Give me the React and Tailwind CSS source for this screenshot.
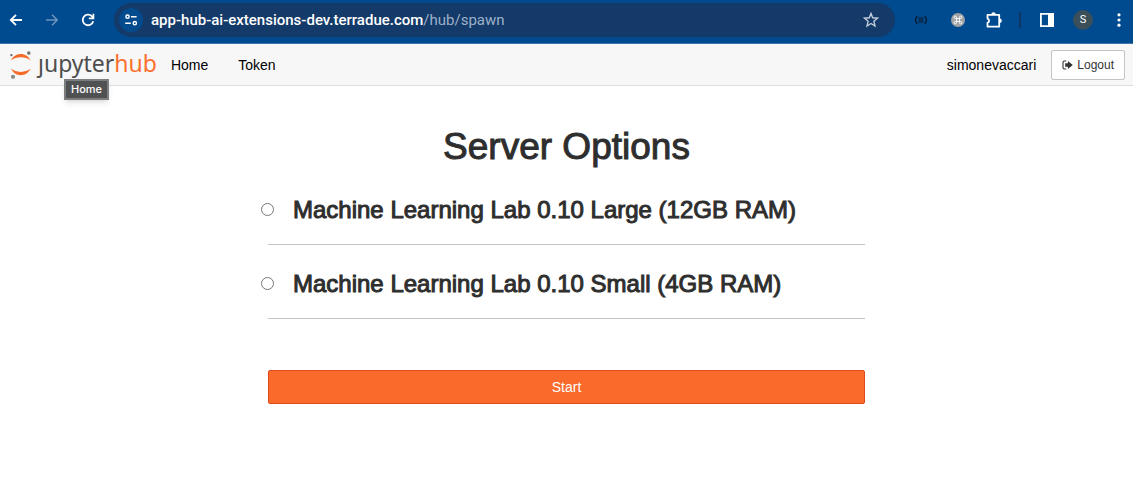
const servers = [
  { id: "large", name: "Machine Learning Lab 0.10 Large (12GB RAM)" },
  { id: "small", name: "Machine Learning Lab 0.10 Small (4GB RAM)" },
];

function BrowserBar() {
  return (
    <header className="flex h-11 items-center border-b border-[#3f73a9] bg-[#004a8f] pb-1 text-white">
      <div className="flex items-center gap-5 pl-2">
        <button type="button" aria-label="Back">
          <svg width="16" height="16" viewBox="0 0 16 16" fill="none" stroke="currentColor" strokeWidth="1.8">
            <path d="M14 8H3M8 2.8 2.8 8 8 13.2" />
          </svg>
        </button>
        <button type="button" aria-label="Forward" className="text-[#6d94bd]">
          <svg width="16" height="16" viewBox="0 0 16 16" fill="none" stroke="currentColor" strokeWidth="1.6">
            <path d="M2 8h11M8 2.8 13.2 8 8 13.2" />
          </svg>
        </button>
        <button type="button" aria-label="Reload">
          <svg width="16" height="16" viewBox="0 0 16 16" fill="none" stroke="currentColor" strokeWidth="1.8">
            <path d="M13.2 9.2A5.3 5.3 0 1 1 11.8 4.2L13.4 6" />
            <path d="M13.4 1.8v4.6H8.8" />
          </svg>
        </button>
      </div>
      <div className="ml-[18px] flex h-[34px] flex-1 items-center rounded-full bg-[#133a69] pl-[5px] pr-4">
        <button type="button" aria-label="View site information" className="flex size-6 items-center justify-center rounded-full bg-[#044b8d]">
          <svg width="14" height="14" viewBox="0 0 14 14" fill="none" stroke="currentColor" strokeWidth="1.5">
            <circle cx="3.5" cy="3.7" r="1.6" />
            <path d="M7 3.7h5.6M1.2 10.2h5.6" />
            <circle cx="10.8" cy="10.2" r="1.6" />
          </svg>
        </button>
        <div className="ml-2 flex-1 font-['Roboto',sans-serif] text-[15px] leading-5 text-[#9db0c8]">
          <span className="font-medium text-white">app-hub-ai-extensions-dev.terradue.com</span>/hub/spawn
        </div>
        <button type="button" aria-label="Bookmark this tab" className="text-[#c3cdda]">
          <svg width="16" height="16" viewBox="0 0 16 16" fill="none" stroke="currentColor" strokeWidth="1.4">
            <path d="m8 1.5 1.7 4.3 4.8.4-3.6 3.1 1.1 4.7L8 11.5 4 14l1.1-4.7-3.6-3.1 4.8-.4z" />
          </svg>
        </button>
      </div>
      <div className="flex items-center pr-1.5">
        <button type="button" aria-label="JSON extension" className="ml-[18px]">
          <svg width="16" height="16" viewBox="0 0 16 16" fill="none" stroke="#0a1420" strokeWidth="1.2">
            <path d="M4.500 4.500c-1.500 0-1.500.5-1.500 1.700S2.800 8 1.800 8c1 0 1.200.6 1.200 1.800s0 1.700 1.500 1.700M11.500 4.500c1.500 0 1.500.5 1.500 1.700S13.200 8 14.200 8c-1 0-1.200.6-1.200 1.800s0 1.700-1.500 1.700" />
            <path d="M5.500 6h5M5.500 8h5M5.500 10h5" strokeWidth="1" />
          </svg>
        </button>
        <button type="button" aria-label="Command extension" className="ml-[22px]">
          <svg width="14" height="14" viewBox="0 0 14 14">
            <circle cx="7" cy="7" r="7" fill="#a0a2a4" />
            <path d="M5.500 5.500h3v3h-3zM5.500 5.500H4.300a1.200 1.200 0 1 1 1.200-1.200zM8.500 5.500V4.300a1.200 1.200 0 1 1 1.200 1.200zM8.500 8.500h1.200a1.200 1.200 0 1 1-1.200 1.200zM5.500 8.500v1.200a1.200 1.200 0 1 1-1.200-1.200z" fill="none" stroke="#fff" strokeWidth=".9" />
          </svg>
        </button>
        <button type="button" aria-label="Extensions" className="ml-5">
          <svg width="18" height="18" viewBox="0 0 18 18">
            <path d="M2.500 3.800H14.200V15.700H2.500V11.900a2.200 2.200 0 0 0 0-4.200z" fill="none" stroke="#fff" strokeWidth="1.8" strokeLinejoin="round" />
            <path d="M6.300 3.500a2.200 2.200 0 0 1 4.400 0zM14.600 7.500a2.200 2.200 0 0 1 0 4.400z" fill="#fff" />
          </svg>
        </button>
        <div className="ml-4 h-4 w-0.5 bg-[#103764]" />
        <button type="button" aria-label="Side panel" className="ml-[18px]">
          <svg width="16" height="16" viewBox="0 0 16 16">
            <path d="M1.900 1.900h12.200v12.200H1.900z" fill="none" stroke="#fff" strokeWidth="1.8" />
            <path d="M9 1.500h5.500v13H9z" fill="#fff" />
          </svg>
        </button>
        <button type="button" aria-label="Profile" className="ml-[18px] flex size-5 items-center justify-center rounded-full bg-[#3b4f5a] font-['Roboto',sans-serif] text-[11px] text-white">
          S
        </button>
        <button type="button" aria-label="Menu" className="ml-[18px]">
          <svg width="16" height="16" viewBox="0 0 16 16" fill="currentColor">
            <circle cx="8" cy="2.8" r="1.6" />
            <circle cx="8" cy="8" r="1.6" />
            <circle cx="8" cy="13.2" r="1.6" />
          </svg>
        </button>
      </div>
    </header>
  );
}

function Logo() {
  return (
    <a href="#home" aria-label="JupyterHub home" className="relative flex items-start gap-1 pl-2">
      <svg width="26" height="30" viewBox="0 0 26 30" className="mt-0.5">
        <path d="M3 9.400C4.800 5.400 8.600 3 12.800 3s8 2.400 9.800 6.400C20 7.300 16.600 6.300 12.800 6.300S5.600 7.300 3 9.400z" fill="#f56b2a" />
        <path d="M3 17.600C4.800 21.900 8.600 24.300 12.800 24.300s8-2.400 9.800-6.700c-2.600 2.300-6 3.300-9.800 3.300s-7.200-1-9.800-3.300z" fill="#f56b2a" />
        <circle cx="3.400" cy="4.200" r="1.100" fill="#616262" />
        <circle cx="20.800" cy="2.100" r="1.800" fill="#767677" />
        <circle cx="5" cy="25.800" r="2.100" fill="#8a8a8a" />
      </svg>
      <span className="pb-1 font-['Noto_Sans',sans-serif] text-[23px] leading-7 text-[#4e4e4e]">
        ȷupyter<span className="text-[#fb702c]">hub</span>
      </span>
      <span role="tooltip" className="absolute left-16 top-[30px] border-2 border-[#7c7d7e] bg-[#505153] px-[5px] font-['Inter',sans-serif] text-[11px] font-medium leading-[17px] text-white shadow-md">
        Home
      </span>
    </a>
  );
}

export default function App() {
  return (
    <div className="bg-white font-['Liberation_Sans',sans-serif] text-sm text-[#2e2e2e]">
      <BrowserBar />
      <nav className="flex h-[42px] items-center border-b border-[#e0e0e0] bg-[#f7f7f7] pr-2 text-black">
        <Logo />
        <a href="#home" className="ml-[14px]">Home</a>
        <a href="#token" className="ml-[30px]">Token</a>
        <span className="ml-auto">simonevaccari</span>
        <button type="button" className="ml-[15px] flex h-[30px] items-center gap-1 rounded-xs border border-[#c4c4c4] bg-white px-2.5 text-xs text-[#333]">
          <svg width="11" height="10" viewBox="0 0 11 10" fill="none">
            <path d="M4.200 1H2.500Q1 1 1 2.500v5Q1 9 2.500 9h1.700" stroke="currentColor" strokeWidth="1.1" />
            <path d="M3.200 3.300h2.700V.900L10.800 5 5.900 9.100V6.700H3.200z" fill="currentColor" />
          </svg>
          Logout
        </button>
      </nav>
      <main className="mx-auto w-full max-w-[597px]">
        <h1 className="pt-10 text-center text-[37px] leading-[42px] [-webkit-text-stroke:1px_#2e2e2e]">Server Options</h1>
        <form className="pt-[15px]">
          {servers.map((server) => (
            <div key={server.id} className="mb-3 flex h-[62px] items-center border-b border-[#c4c4c4] pb-2">
              <input type="radio" name="server" id={server.id} className="-ml-[7px] size-[13px] shrink-0" />
              <label htmlFor={server.id} className="ml-[19px] text-[24px] leading-8 [-webkit-text-stroke:1px_#2e2e2e]">{server.name}</label>
            </div>
          ))}
          <button type="submit" className="mt-[39px] h-[34px] w-full rounded-xs border border-[#dd4a1c] bg-[#fa6a2b] text-white">
            Start
          </button>
        </form>
      </main>
    </div>
  );
}
